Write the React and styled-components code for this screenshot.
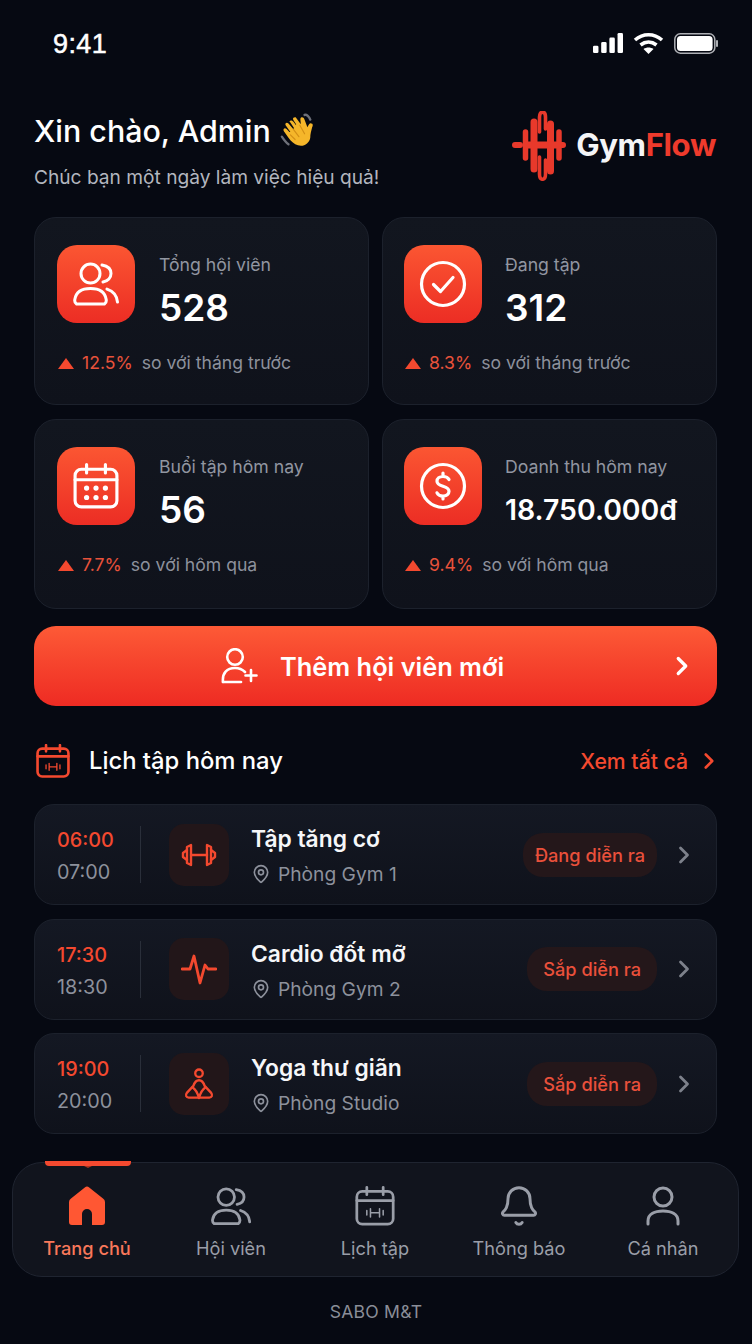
import React from 'react';
import styled, { createGlobalStyle } from 'styled-components';
import { ChevronRight, MapPin, Bell } from 'lucide-react';

const Global = createGlobalStyle`
  html, body { margin: 0; padding: 0; background: #060912; }
  body { font-family: Inter, "Noto Sans", sans-serif; color: #fff; -webkit-font-smoothing: antialiased; }
  * { box-sizing: border-box; }
`;

const RED = '#f4492f';

const Page = styled.div`
  width: 752px; height: 1344px; overflow: hidden;
  background: #060912;
  display: flex; flex-direction: column;
`;
const StatusBar = styled.div`
  height: 87px; padding: 24px 34px 0 53px;
  display: flex; justify-content: space-between; align-items: flex-start;
`;
const Time = styled.div`
  font-size: 27px; line-height: 40px; font-family: "Liberation Sans", Inter, sans-serif; letter-spacing: 0.4px;
  -webkit-text-stroke: 0.5px #fff;
`;
const StatusIcons = styled.div`
  display: flex; align-items: center; gap: 9px; height: 38px;
`;
const Content = styled.div`
  padding: 0 35px 0 34px; display: flex; flex-direction: column; flex: 1;
`;
const Header = styled.header`
  height: 130px; display: flex; justify-content: space-between;
`;
const Greeting = styled.div`
  padding-top: 25px; display: flex; flex-direction: column; gap: 14px;
`;
const Hello = styled.h1`
  margin: 0; font-size: 30.4px; line-height: 38px; font-weight: 500; display: flex; align-items: center; gap: 8px;
`;
const Sub = styled.p`
  margin: 0; font-size: 19.15px; line-height: 26px; color: #b3b6bf;
`;
const Logo = styled.div`
  display: flex; align-items: center; gap: 10px; padding-top: 24px; height: 94px; margin-right: 1px;
`;
const LogoText = styled.span`
  font-size: 31.2px; font-weight: 700; letter-spacing: -0.4px; color: #f4f5f7; margin-top: -3px;
  & > b { color: #ee3a2c; font-weight: 700; }
`;
const StatGrid = styled.section`
  display: grid; grid-template-columns: 335px 335px; grid-template-rows: 188px 190px; gap: 14px 13px;
`;
const StatCard = styled.article`
  border: 1px solid #1c212c; border-radius: 22px;
  background: linear-gradient(180deg, #12161f 0%, #0f121b 100%);
  padding: 27px 22px 0 ${p => p.$right ? '21px' : '22px'}; display: flex; flex-direction: column;
`;
const StatTop = styled.div`
  display: flex; gap: ${p => p.$right ? '23px' : '24px'};
`;
const StatIcon = styled.div`
  width: 78px; height: 78px; border-radius: 20px; flex: none;
  background: linear-gradient(180deg, #fb5632 0%, #ec2d24 100%);
  display: flex; align-items: center; justify-content: center; color: #fff;
`;
const StatText = styled.div`
  display: flex; flex-direction: column; padding-top: 8px;
`;
const StatLabel = styled.div`
  font-size: 17.65px; line-height: 24px; color: #9196a1;
`;
const StatValue = styled.div`
  font-weight: 600; line-height: 44px; margin-top: 9px;
  font-size: ${p => p.$small ? '28.4px' : '37px'};
`;
const Trend = styled.div`
  margin-top: 20px; display: flex; align-items: center; font-size: 17.6px; line-height: 26px; color: #8d919c;
`;
const Up = styled.span`
  width: 0; height: 0; margin: 0 8px 0 1px;
  border-left: 8px solid transparent; border-right: 8px solid transparent; border-bottom: 11px solid ${RED};
`;
const Pct = styled.span`
  color: #e8523b; margin-right: 9px;
`;
const AddButton = styled.button`
  margin-top: 17px; height: 80px; width: 683px; border: 0; border-radius: 22px;
  background: linear-gradient(180deg, #fd5a36 0%, #ee2b23 100%);
  color: #fff; font-family: inherit; font-size: 25.4px; font-weight: 600;
  display: flex; align-items: center; padding: 0 20px 0 187px;
`;
const AddLabel = styled.span`
  margin-left: 21px; flex: 1; text-align: left;
`;
const SectionHead = styled.div`
  height: 98px; display: flex; align-items: center; padding: 11px 0 0 2px;
`;
const SectionIcon = styled.span`
  color: ${RED}; display: flex;
`;
const SectionTitle = styled.h2`
  margin: 0 0 0 19px; font-size: 23.8px; font-weight: 500; flex: 1;
`;
const SeeAll = styled.span`
  color: ${RED}; font-size: 21.2px; font-weight: 500; display: flex; align-items: center; gap: 8px; margin-right: -5px;
`;
const List = styled.div`
  display: flex; flex-direction: column; gap: 13.5px;
`;
const Row = styled.article`
  height: 101px; border: 1px solid #1c212c; border-radius: 20px;
  background: linear-gradient(180deg, #141823 0%, #0f121b 100%);
  display: flex; align-items: center; padding: 0 18px 0 22px;
`;
const Times = styled.div`
  width: 84px; height: 57px; border-right: 1px solid #2a2f3a;
  display: flex; flex-direction: column; justify-content: space-between; font-size: 19.8px; line-height: 26px;
`;
const TimeStart = styled.span` color: ${RED}; font-weight: 500; margin-top: 1px; `;
const TimeEnd = styled.span` color: #8d919c; margin-bottom: -2px; `;
const RowIcon = styled.div`
  width: 60px; height: 62px; border-radius: 15px; background: #221619; margin-left: 28px; flex: none;
  display: flex; align-items: center; justify-content: center;
`;
const Info = styled.div`
  margin: 2px 0 0 22px; flex: 1; display: flex; flex-direction: column; gap: 7px;
`;
const RowTitle = styled.div`
  font-size: 22.8px; line-height: 30px; font-weight: 600; color: #f6f7f9;
`;
const Place = styled.div`
  display: flex; align-items: center; gap: 7px; font-size: 19.2px; line-height: 26px; color: #8d919c;
`;
const Badge = styled.span`
  height: 44px; padding: 0 ${p => p.$wide ? '12px' : '16px'}; border-radius: 20px; background: #24171a;
  color: #e9503b; font-size: 18.2px; font-weight: 500; display: flex; align-items: center;
`;
const RowChevron = styled.div`
  width: 41px; display: flex; justify-content: flex-end; color: #7d818b;
`;
const Nav = styled.nav`
  margin: 0 13px 0 12px; width: 727px; height: 115px; flex: none;
  border: 1px solid #1f2430; border-radius: 30px; background: #11141d;
  display: grid; grid-template-columns: repeat(5, 144px); padding: 0 0 0 2px;
`;
const Tab = styled.div`
  position: relative; display: flex; flex-direction: column; align-items: center; padding-top: 22px;
  color: ${p => p.$active ? '#ff5733' : '#9a9ea8'};
`;
const TabMark = styled.span`
  position: absolute; top: -2px; left: 30px; right: 28px; height: 5px; border-radius: 0 0 4px 4px; background: ${RED};
  &::after {
    content: ''; position: absolute; left: 50%; top: 5px; margin-left: -4px;
    border-left: 4px solid transparent; border-right: 4px solid transparent; border-top: 2px solid #a8331f;
  }
`;
const TabIcon = styled.div`
  height: 42px; display: flex; align-items: center; justify-content: center;
`;
const TabLabel = styled.span`
  margin-top: 9px; font-size: 18.2px; line-height: 24px; font-weight: ${p => p.$active ? 500 : 400};
  color: ${p => p.$active ? '#f9785a' : '#9a9ea8'};
`;
const Foot = styled.div`
  text-align: center; height: 67px; padding-top: 23px; font-size: 17.6px; line-height: 24px; color: #8a8e98; letter-spacing: 0.2px;
`;

const UsersIcon = ({ size = 46, w = 3 }) => (
  <svg width={size} height={size * 0.96} viewBox="0 0 46 44" fill="none" stroke="currentColor" strokeWidth={w} strokeLinecap="round" strokeLinejoin="round">
    <circle cx="17.500" cy="11.500" r="9.500" />
    <path d="M3.500 42C2 41 1.500 39.500 1.800 37.500 3 30 9 26.500 17.500 26.500S32 30 33.200 37.500C33.500 39.500 33 41 31.500 42z" />
    <path d="M29 3c6 1 9 4.500 9 8.500s-3 7.500-8 8.500" />
    <path d="M34 27c6 2 10 7 10.500 13" />
  </svg>
);
const CheckIcon = () => (
  <svg width="48" height="48" viewBox="0 0 48 48" fill="none" stroke="#fff" strokeWidth="3.200" strokeLinecap="round" strokeLinejoin="round">
    <circle cx="24" cy="24" r="21.500" />
    <path d="M14.500 24.500l7 7 12.500-14" />
  </svg>
);
const DollarIcon = () => (
  <svg width="48" height="48" viewBox="0 0 48 48" fill="none" stroke="#fff" strokeWidth="3.200" strokeLinecap="round" strokeLinejoin="round">
    <circle cx="24" cy="24" r="21.500" />
    <path d="M30 17.500c-1-2-3.500-3-6-3-3.500 0-6 2-6 4.800 0 6.500 12 3.500 12 10 0 2.800-2.500 4.700-6 4.700-2.500 0-5-1-6-3.200M24 11v3.500M24 34v3" />
  </svg>
);
const PlusUser = () => (
  <svg width="38" height="36" viewBox="0 0 38 36" fill="none" stroke="#fff" strokeWidth="2.600" strokeLinecap="round" strokeLinejoin="round">
    <circle cx="14" cy="9" r="7.800" />
    <path d="M2 34c-1-9 4-14 12-14 5 0 8 2 10 4" />
    <path d="M2 34h18" />
    <path d="M30 22v11M24.500 27.500h11" />
  </svg>
);
const CalendarIcon = ({ size = 46, w = 3, dumbbell, dots }) => (
  <svg width={size} height={size} viewBox="0 0 44 44" fill="none" stroke="currentColor" strokeWidth={w} strokeLinecap="round" strokeLinejoin="round">
    <rect x="2" y="6" width="40" height="36" rx="6" />
    <path d="M2 16h40M13 1.500v8M31 1.500v8" />
    {dots && <g fill="currentColor" stroke="none">
      <circle cx="13" cy="24" r="2.500" /><circle cx="22" cy="24" r="2.500" /><circle cx="31" cy="24" r="2.500" />
      <circle cx="13" cy="33" r="2.500" /><circle cx="22" cy="33" r="2.500" /><circle cx="31" cy="33" r="2.500" />
    </g>}
    {dumbbell && <path strokeWidth="1.700" d="M13 27v5M17 25v9M17 29.500h10M27 25v9M31 27v5" />}
  </svg>
);
const DumbbellIcon = () => (
  <svg width="36" height="26" viewBox="0 0 36 26" fill="none" stroke={RED} strokeWidth="2.400" strokeLinecap="round" strokeLinejoin="round">
    <path d="M10 13h16" />
    <path d="M10 3v20l-4-2V5zM26 3v20l4-2V5z" />
    <path d="M6 8l-4 3v4l4 3M30 8l4 3v4l-4 3" />
  </svg>
);
const PulseIcon = () => (
  <svg width="36" height="32" viewBox="0 0 36 32" fill="none" stroke={RED} strokeWidth="2.800" strokeLinecap="round" strokeLinejoin="round">
    <path d="M1 16h8l4-13 6 27 5-18 3 4h8" />
  </svg>
);
const YogaIcon = () => (
  <svg width="30" height="32" viewBox="0 0 32 34" fill="none" stroke={RED} strokeWidth="2.500" strokeLinecap="round" strokeLinejoin="round">
    <circle cx="16" cy="5.500" r="4" />
    <path d="M16 13c-4 0-5 3-6 6l-7 7.500c-2 2.500-.5 5 2 5h22c2.500 0 4-2.500 2-5l-7-7.500c-1-3-2-6-6-6z" />
    <path d="M9 20.500c3 2 5.500 6 7 11.500 1.500-5.500 4-9.500 7-11.500" />
  </svg>
);
const HomeIcon = () => (
  <svg width="36" height="40" viewBox="0 0 36 40" fill="#ff5733">
    <path d="M15.800 1.500a3.500 3.500 0 0 1 4.400 0L34 12.500a4 4 0 0 1 2 3.500v20a3 3 0 0 1-3 3H23V28a5 5 0 0 0-10 0v11H3a3 3 0 0 1-3-3V16a4 4 0 0 1 2-3.500z" />
  </svg>
);
const PersonIcon = () => (
  <svg width="34" height="40" viewBox="0 0 34 40" fill="none" stroke="currentColor" strokeWidth="3" strokeLinecap="round">
    <circle cx="17" cy="11" r="9" />
    <path d="M2 38v-3c0-7 7-10 15-10s15 3 15 10v3" />
  </svg>
);
const GymLogo = () => (
  <svg width="54" height="70" viewBox="0 0 54 70" fill="none" stroke="#e8392b" strokeLinecap="round" strokeLinejoin="round">
    <path strokeWidth="6" d="M3 34h5M46 34h5" />
    <path strokeWidth="5.500" d="M13.500 21v26M47 21v26" />
    <path strokeWidth="7" d="M22 11v47M38.500 13v47" />
    <path strokeWidth="7" d="M16 34h28" />
    <path strokeWidth="3.600" d="M27.500 21V6c0-6.500 6-6.500 6 0v12" />
    <path strokeWidth="3.600" d="M27.500 46v17c0 7 6 7 6 0V49" />
  </svg>
);
const WaveEmoji = () => (
  <svg width="36" height="36" viewBox="0 0 38 38">
    <path d="M27 2c2-1 5 2 6 5" fill="none" stroke="#6d7079" strokeWidth="2.500" strokeLinecap="round" />
    <path d="M3 25c2 3 4 6 7 8" fill="none" stroke="#6d7079" strokeWidth="2.500" strokeLinecap="round" />
    <path fill="#f5b62a" d="M11 9c1-2 3-1 4 0l3 4 0-1-3-5c-1-2 2-3 3-2l5 7c0-3-1-6 0-7 2-1 3 0 4 2l3 8c1-2 2-5 4-4 2 0 2 2 1 4-1 4-2 7-2 11-1 6-7 10-13 8-4-1-7-4-10-8l-5-7c-1-2 1-4 3-2l3 3 1 0-5-7c-1-2 1-4 3-2l5 6 1-1-4-6z" />
    <path d="M22 13l5 9M15 17l6 8M12 23l5 5" stroke="#d38f16" strokeWidth="1.200" fill="none" strokeLinecap="round" />
  </svg>
);

const stats = [
  { icon: <UsersIcon />, label: 'Tổng hội viên', value: '528', pct: '12.5%', cmp: 'so với tháng trước' },
  { icon: <CheckIcon />, label: 'Đang tập', value: '312', pct: '8.3%', cmp: 'so với tháng trước', right: true },
  { icon: <CalendarIcon dots />, label: 'Buổi tập hôm nay', value: '56', pct: '7.7%', cmp: 'so với hôm qua' },
  { icon: <DollarIcon />, label: 'Doanh thu hôm nay', value: '18.750.000đ', pct: '9.4%', cmp: 'so với hôm qua', small: true, right: true },
];
const sessions = [
  { start: '06:00', end: '07:00', icon: <DumbbellIcon />, title: 'Tập tăng cơ', place: 'Phòng Gym 1', status: 'Đang diễn ra', wide: true },
  { start: '17:30', end: '18:30', icon: <PulseIcon />, title: 'Cardio đốt mỡ', place: 'Phòng Gym 2', status: 'Sắp diễn ra' },
  { start: '19:00', end: '20:00', icon: <YogaIcon />, title: 'Yoga thư giãn', place: 'Phòng Studio', status: 'Sắp diễn ra' },
];
const tabs = [
  { icon: <HomeIcon />, label: 'Trang chủ', active: true },
  { icon: <UsersIcon size={40} w={3.200} />, label: 'Hội viên' },
  { icon: <CalendarIcon size={40} dumbbell />, label: 'Lịch tập' },
  { icon: <Bell size={44} strokeWidth={1.600} />, label: 'Thông báo' },
  { icon: <PersonIcon />, label: 'Cá nhân' },
];

export default function App() {
  return (
    <Page>
      <Global />
      <StatusBar>
        <Time>9:41</Time>
        <StatusIcons>
          <svg width="32" height="20" viewBox="0 0 33 22" fill="#fff">
            <rect x="0" y="14" width="6" height="8" rx="1.500" /><rect x="9" y="10" width="6" height="12" rx="1.500" />
            <rect x="18" y="5" width="6" height="17" rx="1.500" /><rect x="27" y="0" width="6" height="22" rx="1.500" />
          </svg>
          <svg width="31" height="22" viewBox="0 0 31 22" fill="none" stroke="#fff" strokeWidth="3.600">
            <path d="M2 8c8-7 19-7 27 0" /><path d="M7.500 13c5-4 11-4 16 0" />
            <path fill="#fff" stroke="none" d="M15.500 22l-5-5c3-2 7-2 10 0z" />
          </svg>
          <svg width="44" height="21" viewBox="0 0 44 21" fill="none" style={{ marginLeft: 1 }}>
            <rect x="0.800" y="0.800" width="40" height="19.400" rx="5.500" stroke="#aeb0b5" strokeWidth="1.500" />
            <rect x="3" y="3" width="35.600" height="15" rx="3.500" fill="#fff" />
            <rect x="42" y="7" width="2" height="7" rx="1" fill="#aeb0b5" />
          </svg>
        </StatusIcons>
      </StatusBar>
      <Content>
        <Header>
          <Greeting>
            <Hello>Xin chào, Admin <WaveEmoji /></Hello>
            <Sub>Chúc bạn một ngày làm việc hiệu quả!</Sub>
          </Greeting>
          <Logo>
            <GymLogo />
            <LogoText>Gym<b>Flow</b></LogoText>
          </Logo>
        </Header>
        <StatGrid>
          {stats.map(s => (
            <StatCard key={s.label} $right={s.right}>
              <StatTop $right={s.right}>
                <StatIcon>{s.icon}</StatIcon>
                <StatText>
                  <StatLabel>{s.label}</StatLabel>
                  <StatValue $small={s.small}>{s.value}</StatValue>
                </StatText>
              </StatTop>
              <Trend><Up /><Pct>{s.pct}</Pct>{s.cmp}</Trend>
            </StatCard>
          ))}
        </StatGrid>
        <AddButton>
          <PlusUser />
          <AddLabel>Thêm hội viên mới</AddLabel>
          <ChevronRight size={30} strokeWidth={2.600} />
        </AddButton>
        <SectionHead>
          <SectionIcon><CalendarIcon size={34} dumbbell w={3.400} /></SectionIcon>
          <SectionTitle>Lịch tập hôm nay</SectionTitle>
          <SeeAll>Xem tất cả <ChevronRight size={26} strokeWidth={2.400} /></SeeAll>
        </SectionHead>
        <List>
          {sessions.map(s => (
            <Row key={s.title}>
              <Times><TimeStart>{s.start}</TimeStart><TimeEnd>{s.end}</TimeEnd></Times>
              <RowIcon>{s.icon}</RowIcon>
              <Info>
                <RowTitle>{s.title}</RowTitle>
                <Place><MapPin size={20} strokeWidth={2} />{s.place}</Place>
              </Info>
              <Badge $wide={s.wide}>{s.status}</Badge>
              <RowChevron><ChevronRight size={28} strokeWidth={2.400} /></RowChevron>
            </Row>
          ))}
        </List>
      </Content>
      <Nav>
        {tabs.map(t => (
          <Tab key={t.label} $active={t.active}>
            {t.active && <TabMark />}
            <TabIcon>{t.icon}</TabIcon>
            <TabLabel $active={t.active}>{t.label}</TabLabel>
          </Tab>
        ))}
      </Nav>
      <Foot>SABO M&amp;T</Foot>
    </Page>
  );
}
